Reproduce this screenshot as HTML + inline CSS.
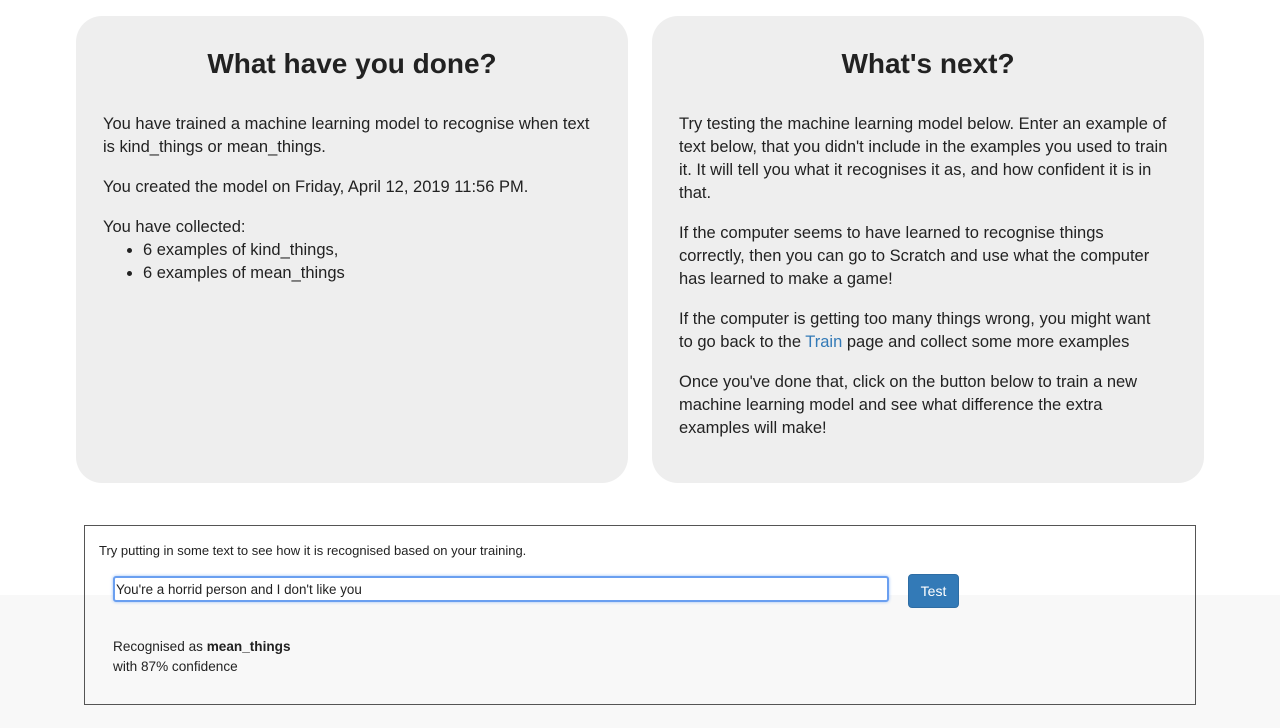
<!DOCTYPE html>
<html><head><meta charset="utf-8"><style>
html,body{margin:0;padding:0;width:1280px;height:728px;overflow:hidden;font-family:"Liberation Sans",sans-serif;color:#222;background:linear-gradient(#fff 0,#fff 595px,#f8f8f8 595px)}
.p{position:absolute;top:16px;width:552px;height:467px;background:#eee;border-radius:26px;box-sizing:border-box;padding:0 20px 0 27px}
.p h2{font-size:28px;font-weight:bold;text-align:center;margin:31px 0 32px -7px;line-height:34px}
.p p{font-size:16.5px;line-height:23px;margin:0 0 17px;white-space:nowrap}
.p ul{margin:0;padding-left:40px;font-size:16.5px;line-height:23px}
a{color:#337ab7;text-decoration:none}
.box{position:absolute;left:84px;top:525px;width:1112px;height:180px;box-sizing:border-box;border:1px solid #555;font-size:13.6px}
.inp{position:absolute;left:28px;top:50px;width:776px;height:26px;box-sizing:border-box;border:2px solid #6a9ff0;border-radius:3px;box-shadow:0 0 3px #9bc0f5;background:#fff;padding:3px 1px;font-size:13.4px;line-height:17px}
.btn{position:absolute;left:823px;top:48px;width:51px;height:34px;background:#337ab7;border:1px solid #2e6da4;border-radius:4px;box-sizing:border-box;color:#fff;font-size:14px;text-align:center;line-height:32px}
</style></head><body>
<div class="p" style="left:76px">
<h2>What have you done?</h2>
<p>You have trained a machine learning model to recognise when text<br>is kind_things or mean_things.</p>
<p>You created the model on Friday, April 12, 2019 11:56 PM.</p>
<p style="margin:0">You have collected:</p>
<ul><li>6 examples of kind_things,</li><li>6 examples of mean_things</li></ul>
</div>
<div class="p" style="left:652px">
<h2>What's next?</h2>
<p>Try testing the machine learning model below. Enter an example of<br>text below, that you didn't include in the examples you used to train<br>it. It will tell you what it recognises it as, and how confident it is in<br>that.</p>
<p>If the computer seems to have learned to recognise things<br>correctly, then you can go to Scratch and use what the computer<br>has learned to make a game!</p>
<p>If the computer is getting too many things wrong, you might want<br>to go back to the <a>Train</a> page and collect some more examples</p>
<p>Once you've done that, click on the button below to train a new<br>machine learning model and see what difference the extra<br>examples will make!</p>
</div>
<div class="box">
<div style="position:absolute;left:14px;top:17px;font-size:13px">Try putting in some text to see how it is recognised based on your training.</div>
<div class="inp">You're a horrid person and I don't like you</div>
<div class="btn">Test</div>
<div style="position:absolute;left:28px;top:111px;line-height:20px">Recognised as <b>mean_things</b><br>with 87% confidence</div>
</div>
</body></html>
